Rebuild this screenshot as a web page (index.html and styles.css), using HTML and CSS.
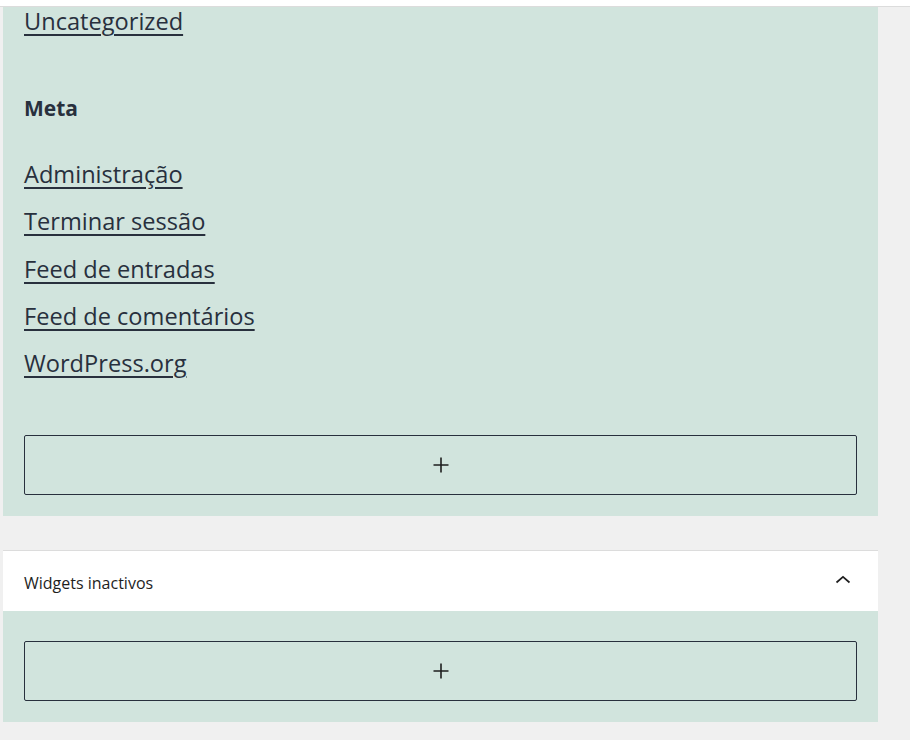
FILE: index.html
```html
<!DOCTYPE html>
<html lang="pt">
<head>
<meta charset="utf-8">
<title>Widgets</title>
<link rel="stylesheet" href="styles.css">
</head>
<body>
<div class="topbar"></div>
<main class="content">
  <section class="area">
    <ul class="links first">
      <li><a href="#">Uncategorized</a></li>
    </ul>
    <h2 class="widget-title">Meta</h2>
    <ul class="links">
      <li><a href="#">Administração</a></li>
      <li><a href="#">Terminar sessão</a></li>
      <li><a href="#">Feed de entradas</a></li>
      <li><a href="#">Feed de comentários</a></li>
      <li><a href="#">WordPress.org</a></li>
    </ul>
    <button class="add-btn" type="button" aria-label="Adicionar bloco">
      <svg width="16" height="16" viewBox="0 0 16 16"><path d="M8 0.5v15M0.5 8h15" stroke="#1e1e1e" stroke-width="1.6" fill="none"/></svg>
    </button>
  </section>

  <section class="panel">
    <header class="panel-head">
      <span class="panel-title">Widgets inactivos</span>
      <svg class="chev" width="16" height="9" viewBox="0 0 16 9"><path d="M1.5 7.5L8 1.8l6.5 5.7" stroke="#1e1e1e" stroke-width="1.7" fill="none"/></svg>
    </header>
    <div class="panel-body">
      <button class="add-btn" type="button" aria-label="Adicionar bloco">
        <svg width="16" height="16" viewBox="0 0 16 16"><path d="M8 0.5v15M0.5 8h15" stroke="#1e1e1e" stroke-width="1.6" fill="none"/></svg>
      </button>
    </div>
  </section>
</main>
</body>
</html>
```

FILE: styles.css
```css
* { box-sizing: border-box; }
html, body { margin: 0; padding: 0; }
body {
  background: #f0f0f0;
  font-family: "Open Sans", "Noto Sans", sans-serif;
  color: #28303d;
  width: 910px;
  height: 740px;
  overflow: hidden;
}
.topbar {
  height: 7px;
  background: #fff;
  border-bottom: 1px solid #dcdcdc;
}
.content {
  padding-left: 3px;
  width: 878px;
}
.area {
  background: #d1e4dd;
  padding: 1px 21px 21px 21px;
}
.links {
  list-style: none;
  margin: 0;
  padding: 0;
  font-size: 23.6px;
  line-height: 47.25px;
}
.links.first { line-height: 26px; }
.links a {
  color: #28303d;
  text-decoration: underline;
  text-decoration-thickness: 2px;
  text-underline-offset: 4px;
}
.widget-title {
  margin: 59px 0 28px;
  font-size: 21px;
  line-height: 30px;
  font-weight: 700;
  color: #28303d;
}
.links + .add-btn { margin-top: 48px; }
.add-btn {
  display: flex;
  align-items: center;
  justify-content: center;
  width: 100%;
  height: 60px;
  background: transparent;
  border: 1px solid #28303d;
  border-radius: 2px;
  padding: 0;
  margin: 0;
}
.panel {
  margin-top: 34px;
}
.panel-head {
  display: flex;
  align-items: center;
  justify-content: space-between;
  height: 61px;
  background: #fff;
  border-top: 1px solid #dcdcdc;
  padding: 0 27px 0 21px;
}
.panel-title {
  font-size: 16px;
  color: #1e1e1e;
  margin-top: 3px;
}
.chev { margin-top: -3px; }
.panel-body {
  background: #d1e4dd;
  padding: 30px 21px 21px;
}
```
